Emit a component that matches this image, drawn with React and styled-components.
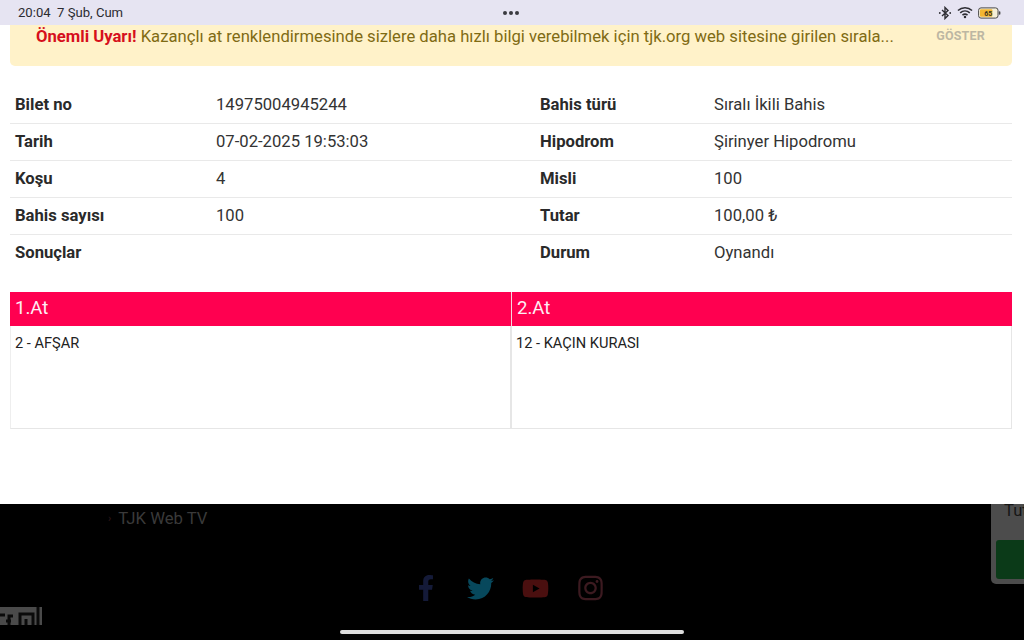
import React from "react";
import styled, { createGlobalStyle } from "styled-components";
import { FaFacebookF, FaTwitter, FaYoutube, FaInstagram } from "react-icons/fa";

const GlobalStyle = createGlobalStyle`
  html, body {
    margin: 0;
    padding: 0;
    background: #fff;
    font-family: Roboto, "Liberation Sans", sans-serif;
  }
`;

const Page = styled.div`
  position: relative;
  display: flex;
  flex-direction: column;
  width: 1024px;
  height: 640px;
  overflow: hidden;
`;

const StatusBar = styled.div`
  display: flex;
  align-items: center;
  justify-content: space-between;
  height: 25px;
  padding: 0 23px 0 18px;
  background: #e6e4f2;
  color: #2b2b30;
  font-size: 13.1px;
  flex-shrink: 0;
`;

const Clock = styled.div`
  width: 300px;
  white-space: pre;
`;

const Dots = styled.div`
  display: flex;
  gap: 2px;
  margin-left: 2px;
`;

const Dot = styled.span`
  width: 4px;
  height: 4px;
  border-radius: 50%;
  background: #3a3a40;
`;

const StatusIcons = styled.div`
  display: flex;
  align-items: center;
  justify-content: flex-end;
  gap: 5px;
  width: 300px;
`;

const Alert = styled.div`
  display: flex;
  justify-content: space-between;
  height: 41px;
  margin: 0 12px 0 10px;
  padding-left: 26px;
  padding-right: 27px;
  background: #fff2c9;
  border-radius: 0 0 5px 5px;
  flex-shrink: 0;
`;

const AlertText = styled.div`
  font-size: 16.67px;
  line-height: 24px;
  color: #7f6b14;
  white-space: nowrap;
`;

const AlertStrong = styled.strong`
  color: #d6101c;
  font-weight: 700;
`;

const ShowButton = styled.div`
  font-size: 12.5px;
  font-weight: 700;
  line-height: 22px;
  letter-spacing: 0.2px;
  color: #bdb7a3;
`;

const InfoTable = styled.div`
  display: grid;
  grid-template-columns: 524px 1fr;
  margin: 21px 12px 0 10px;
  flex-shrink: 0;
`;

const InfoRow = styled.div`
  display: grid;
  grid-template-columns: ${({ $right }) => ($right ? "174px 1fr" : "201px 1fr")};
  align-items: center;
  box-sizing: border-box;
  height: 37px;
  padding-bottom: 2px;
  padding-left: ${({ $right }) => ($right ? "6px" : "5px")};
  border-bottom: ${({ $last }) => ($last ? "1px solid transparent" : "1px solid #e9e9e9")};
`;

const Label = styled.div`
  font-size: 16.65px;
  font-weight: 700;
  color: #2a2a2a;
`;

const Value = styled.div`
  font-size: 16.65px;
  color: #333;
`;

const HorseTable = styled.div`
  display: grid;
  grid-template-columns: 501px 501px;
  height: 137px;
  margin: 20px 12px 0 10px;
  flex-shrink: 0;
`;

const HorseColumn = styled.div`
  display: flex;
  flex-direction: column;
`;

const HorseHead = styled.div`
  height: 34px;
  line-height: 32px;
  padding-left: 5px;
  background: #ff0050;
  color: #fdeef3;
  font-size: 18.6px;
  border-left: ${({ $first }) => ($first ? "none" : "1px solid #f6d5df")};
`;

const HorseBody = styled.div`
  flex: 1;
  padding: 9px 4px;
  font-size: 14.6px;
  line-height: 17px;
  color: #222;
  border-bottom: 1px solid #e6e6e6;
  border-left: ${({ $first }) => ($first ? "1px solid #eee" : "1px solid #e6e6e6")};
  border-right: 1px solid #e6e6e6;
`;

const Footer = styled.div`
  position: relative;
  flex: 1;
  margin-top: 75px;
  background: #000;
`;

const FooterLink = styled.div`
  display: flex;
  align-items: center;
  gap: 7px;
  margin-left: 108px;
  padding-top: 4px;
  height: 21px;
  font-size: 16.7px;
  color: #3a3a3a;
`;

const Chevron = styled.span`
  color: #2a1416;
  font-size: 11px;
  font-weight: 700;
`;

const Socials = styled.div`
  display: flex;
  justify-content: center;
  align-items: center;
  gap: 28px;
  margin-top: 44px;
  margin-right: 8px;
  height: 30px;
`;

const SocialIcon = styled.span`
  display: flex;
  justify-content: center;
  width: 27px;
  color: ${({ $color }) => $color};
  font-size: ${({ $size }) => $size}px;
`;

const QrStub = styled.div`
  position: absolute;
  left: 0;
  top: 103px;
  width: 42px;
  height: 18px;
  background: #4a4a4a;
  overflow: hidden;
`;

const FloatCard = styled.div`
  position: absolute;
  right: 0;
  top: 0;
  width: 33px;
  height: 80px;
  padding: 0 0 0 5px;
  background: #4c4c4c;
  border-radius: 0 0 0 5px;
  box-sizing: border-box;
`;

const FloatText = styled.div`
  padding-left: 8px;
  font-size: 16.6px;
  line-height: 14px;
  color: #161616;
  white-space: nowrap;
  overflow: hidden;
`;

const FloatButton = styled.div`
  height: 39px;
  margin-top: 22px;
  background: #0b3a18;
  border-radius: 3px 0 0 3px;
`;

const HomeBar = styled.div`
  position: absolute;
  left: 340px;
  bottom: 6px;
  width: 344px;
  height: 4px;
  border-radius: 2px;
  background: #dcdcdc;
`;

const BluetoothIcon = () => (
  <svg width="14" height="14" viewBox="0 0 14 14" fill="none" stroke="#2e2e34" strokeWidth="1.4">
    <path d="M4 4l6 5.5L7 12.5V1.5l3 3L4 10" />
    <circle cx="1.8" cy="7" r="0.9" fill="#2e2e34" stroke="none" />
    <circle cx="12.2" cy="7" r="0.9" fill="#2e2e34" stroke="none" />
  </svg>
);

const WifiIcon = () => (
  <svg width="16" height="13" viewBox="0 0 17 13" fill="none" stroke="#2e2e34" strokeWidth="1.6">
    <path d="M1 4.4C5.3 .5 11.7 .5 16 4.4" />
    <path d="M3.4 6.9c3-2.6 7.2-2.6 10.2 0" />
    <path d="M5.8 9.3c1.6-1.3 3.8-1.3 5.4 0" />
    <circle cx="8.5" cy="11.3" r="1.3" fill="#2e2e34" stroke="none" />
  </svg>
);

const BatteryIcon = () => (
  <svg width="23" height="12" viewBox="0 0 23 12">
    <rect x="0.6" y="0.9" width="19.4" height="10.2" rx="2.4" fill="#f5efd8" stroke="#4a4a4a" strokeWidth="1" />
    <rect x="2" y="2.2" width="12.4" height="7.6" rx="1" fill="#f2b632" />
    <rect x="20.8" y="4.2" width="1.6" height="3.6" rx="0.8" fill="#4a4a4a" />
    <text x="10.2" y="8.6" textAnchor="middle" fontSize="7" fontWeight="700" fill="#3c3420" fontFamily="Roboto">65</text>
  </svg>
);

const leftRows = [
  ["Bilet no", "14975004945244"],
  ["Tarih", "07-02-2025 19:53:03"],
  ["Koşu", "4"],
  ["Bahis sayısı", "100"],
  ["Sonuçlar", ""],
];

const rightRows = [
  ["Bahis türü", "Sıralı İkili Bahis"],
  ["Hipodrom", "Şirinyer Hipodromu"],
  ["Misli", "100"],
  ["Tutar", "100,00 ₺"],
  ["Durum", "Oynandı"],
];

const App = () => (
  <Page>
    <GlobalStyle />
    <StatusBar>
      <Clock>20:04  7 Şub, Cum</Clock>
      <Dots>
        <Dot />
        <Dot />
        <Dot />
      </Dots>
      <StatusIcons>
        <BluetoothIcon />
        <WifiIcon />
        <BatteryIcon />
      </StatusIcons>
    </StatusBar>

    <Alert>
      <AlertText>
        <AlertStrong>Önemli Uyarı!</AlertStrong> Kazançlı at renklendirmesinde sizlere daha hızlı bilgi verebilmek için tjk.org web sitesine girilen sırala...
      </AlertText>
      <ShowButton>GÖSTER</ShowButton>
    </Alert>

    <InfoTable>
      {leftRows.map(([label, value], i) => (
        <React.Fragment key={label}>
          <InfoRow $last={i === 4}>
            <Label>{label}</Label>
            <Value>{value}</Value>
          </InfoRow>
          <InfoRow $right $last={i === 4}>
            <Label>{rightRows[i][0]}</Label>
            <Value>{rightRows[i][1]}</Value>
          </InfoRow>
        </React.Fragment>
      ))}
    </InfoTable>

    <HorseTable>
      <HorseColumn>
        <HorseHead $first>1.At</HorseHead>
        <HorseBody $first>2 - AFŞAR</HorseBody>
      </HorseColumn>
      <HorseColumn>
        <HorseHead>2.At</HorseHead>
        <HorseBody>12 - KAÇIN KURASI</HorseBody>
      </HorseColumn>
    </HorseTable>

    <Footer>
      <FooterLink>
        <Chevron>›</Chevron>
        TJK Web TV
      </FooterLink>
      <Socials>
        <SocialIcon $color="#141a38" $size={26}><FaFacebookF /></SocialIcon>
        <SocialIcon $color="#07485c" $size={27}><FaTwitter /></SocialIcon>
        <SocialIcon $color="#4a0f0f" $size={29}><FaYoutube /></SocialIcon>
        <SocialIcon $color="#3c1a20" $size={28}><FaInstagram /></SocialIcon>
      </Socials>
      <QrStub>
        <svg width="42" height="18" viewBox="0 0 42 18" fill="none" stroke="#0a0a0a" strokeWidth="3">
          <path d="M-1 8h6M9 18V9h4M6 14h5M20 18V7h13v11M26 12v6M38 0v18" />
        </svg>
      </QrStub>
      <FloatCard>
        <FloatText>Tutar</FloatText>
        <FloatButton />
      </FloatCard>
      <HomeBar />
    </Footer>
  </Page>
);

export default App;
